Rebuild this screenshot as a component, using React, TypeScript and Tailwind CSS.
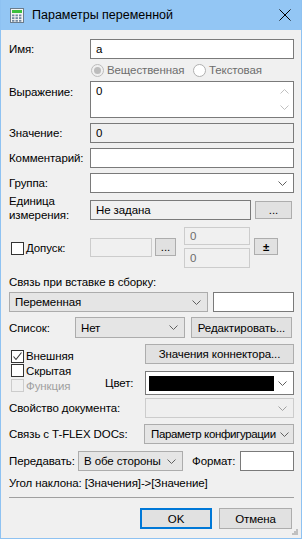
import React from "react";

function Chevron({ color = "#606060" }: { color?: string }) {
  return (
    <svg width="9" height="5" viewBox="0 0 9 5" className="shrink-0">
      <path d="M0.5 0.5 L4.5 4.5 L8.5 0.5" fill="none" stroke={color} strokeWidth="1" />
    </svg>
  );
}

function TextBox({ children, className = "" }: { children?: React.ReactNode; className?: string }) {
  return (
    <div className={"flex h-[20px] min-w-0 items-center border border-[#7a7a7a] bg-white px-[5px] " + className}>
      {children}
    </div>
  );
}

function Combo({
  children,
  className = "",
  flat = false,
  disabled = false,
}: {
  children?: React.ReactNode;
  className?: string;
  flat?: boolean;
  disabled?: boolean;
}) {
  const look = disabled
    ? "border-[#cccccc] bg-[#efefef]"
    : flat
      ? "border-[#7a7a7a] bg-white"
      : "border-[#acacac] bg-[#e5e5e5]";
  return (
    <div className={"flex h-[20px] min-w-0 items-center border pl-[5px] pr-[6px] " + look + " " + className}>
      <div className="min-w-0 flex-1 overflow-hidden whitespace-nowrap">{children}</div>
      <Chevron color={disabled ? "#a0a0a0" : "#606060"} />
    </div>
  );
}

function Button({ children, className = "" }: { children: React.ReactNode; className?: string }) {
  return (
    <div className={"flex shrink-0 items-center justify-center whitespace-nowrap border border-[#adadad] bg-[#e1e1e1] " + className}>
      {children}
    </div>
  );
}

function Check({ checked = false, disabled = false }: { checked?: boolean; disabled?: boolean }) {
  return (
    <div
      className={
        "flex h-[13px] w-[13px] shrink-0 items-center justify-center border " +
        (disabled ? "border-[#cccccc] bg-[#f0f0f0]" : "border-[#333333] bg-white")
      }
    >
      {checked && (
        <svg width="11" height="11" viewBox="0 0 11 11">
          <path d="M1.5 5.5 L4 8.5 L9.5 1.5" fill="none" stroke="#333333" strokeWidth="1.1" />
        </svg>
      )}
    </div>
  );
}

function Radio({ disabled = false }: { disabled?: boolean }) {
  return (
    <div
      className={
        "flex h-[13px] w-[13px] shrink-0 items-center justify-center rounded-full border " +
        (disabled ? "border-[#bcbcbc] bg-[#f0f0f0]" : "border-[#b0b0b0] bg-white")
      }
    >
      {disabled && <div className="h-[7px] w-[7px] rounded-full bg-[#bcbcbc]" />}
    </div>
  );
}

function TitleIcon() {
  return (
    <svg width="14" height="15" viewBox="0 0 14 15">
      <rect x="0.5" y="0.5" width="13" height="14" fill="#f4f4f4" stroke="#6b7c8c" />
      <rect x="2" y="2" width="10" height="3" fill="#3cbf3c" />
      {[0, 1, 2].map((r) =>
        [0, 1, 2].map((c) => (
          <rect key={r + "-" + c} x={2 + c * 3.5} y={6.5 + r * 2.7} width="2.4" height="1.8" fill="#7088a0" />
        ))
      )}
    </svg>
  );
}

export default function App() {
  return (
    <div className="relative flex h-[539px] w-[302px] flex-col whitespace-nowrap border-x border-b border-[#8ec2f2] bg-[#f0f0f0] font-['Liberation_Sans',Arial,sans-serif] text-[11.5px] leading-[14px] tracking-[-0.1px] text-black">
      {/* title bar */}
      <div className="flex h-[30px] shrink-0 items-center bg-[#93c6f4] pl-[9px] pr-[10px]">
        <TitleIcon />
        <div className="ml-[8px] flex-1 text-[12.5px] tracking-normal">Параметры переменной</div>
        <svg width="12" height="12" viewBox="0 0 12 12">
          <path d="M0.5 0.5 L11.5 11.5 M11.5 0.5 L0.5 11.5" stroke="#000" strokeWidth="1" />
        </svg>
      </div>

      <div className="flex flex-1 flex-col pl-[8px] pr-[7px]">
        <div className="mt-[9px] flex h-[20px] items-center">
          <div className="w-[81px] shrink-0">Имя:</div>
          <TextBox className="flex-1">a</TextBox>
        </div>

        <div className="mt-[4px] flex h-[14px] items-center pl-[82px]">
          <div className="flex w-[102px] shrink-0 items-center gap-[3px] text-[#6d6d6d]">
            <Radio disabled />
            <span>Вещественная</span>
          </div>
          <div className="flex items-center gap-[3px] text-[#6d6d6d]">
            <Radio />
            <span>Текстовая</span>
          </div>
        </div>

        <div className="mt-[4px] flex h-[37px]">
          <div className="w-[81px] shrink-0 pt-[4px]">Выражение:</div>
          <div className="flex min-w-0 flex-1 border border-[#7a7a7a] bg-white">
            <div className="flex-1 pl-[5px] pt-[2px]">0</div>
            <div className="flex w-[17px] flex-col items-center justify-between py-[7px]">
              <svg width="9" height="5" viewBox="0 0 9 5">
                <path d="M0.5 4.5 L4.5 0.5 L8.5 4.5" fill="none" stroke="#c0c0c0" />
              </svg>
              <svg width="9" height="5" viewBox="0 0 9 5">
                <path d="M0.5 0.5 L4.5 4.5 L8.5 0.5" fill="none" stroke="#c0c0c0" />
              </svg>
            </div>
          </div>
        </div>

        <div className="mt-[5px] flex h-[20px] items-center">
          <div className="w-[81px] shrink-0">Значение:</div>
          <TextBox className="flex-1 !bg-[#f0f0f0]">0</TextBox>
        </div>

        <div className="mt-[5px] flex h-[20px] items-center">
          <div className="w-[81px] shrink-0">Комментарий:</div>
          <TextBox className="flex-1" />
        </div>

        <div className="mt-[5px] flex h-[20px] items-center">
          <div className="w-[81px] shrink-0">Группа:</div>
          <Combo flat className="flex-1" />
        </div>

        <div className="flex h-[28px] items-start">
          <div className="w-[81px] shrink-0 pt-[1px] leading-[14px]">
            Единица
            <br />
            измерения:
          </div>
          <TextBox className="mt-[7px] w-[161px] !bg-[#f0f0f0]">Не задана</TextBox>
          <Button className="ml-[4px] mt-[8px] h-[18px] w-[37px]">...</Button>
        </div>

        {/* tolerance */}
        <div className="mt-[6px] flex h-[40px] items-start">
          <div className="mt-[14px] flex w-[81px] shrink-0 items-center gap-[2px] pl-[2px]">
            <Check />
            <span>Допуск:</span>
          </div>
          <div className="mt-[11px] h-[19px] w-[62px] shrink-0 border border-[#cccccc] bg-[#f0f0f0]" />
          <Button className="ml-[3px] mt-[11px] h-[18px] w-[21px]">...</Button>
          <div className="ml-[8px] flex w-[66px] shrink-0 flex-col gap-[3px] text-[#6d6d6d]">
            <div className="flex h-[18px] items-center border border-[#cccccc] pl-[5px]">0</div>
            <div className="flex h-[20px] items-center border border-[#cccccc] pl-[5px]">0</div>
          </div>
          <Button className="ml-[4px] mt-[11px] h-[17px] w-[24px] font-bold">±</Button>
        </div>

        <div className="mt-[8px] h-[14px]">Связь при вставке в сборку:</div>

        <div className="mt-[3px] flex h-[20px] items-center gap-[5px]">
          <Combo className="w-[199px] shrink-0">Переменная</Combo>
          <TextBox className="flex-1" />
        </div>

        <div className="mt-[5px] flex h-[21px] items-center">
          <div className="w-[66px] shrink-0">Список:</div>
          <Combo className="h-[21px] w-[110px] shrink-0">Нет</Combo>
          <Button className="ml-[6px] h-[21px] w-[101px]">Редактировать...</Button>
        </div>

        {/* flags, connector, colour */}
        <div className="mt-[6px] flex h-[51px]">
          <div className="flex w-[91px] shrink-0 flex-col pl-[2px] pt-[5px]">
            <div className="flex h-[14px] items-center gap-[2px]">
              <Check checked />
              <span>Внешняя</span>
            </div>
            <div className="flex h-[15px] items-center gap-[2px]">
              <Check />
              <span>Скрытая</span>
            </div>
            <div className="flex h-[15px] items-center gap-[2px] text-[#a0a0a0]">
              <Check disabled />
              <span>Функция</span>
            </div>
          </div>
          <div className="flex min-w-0 flex-1 flex-col">
            <Button className="ml-[45px] h-[20px]">Значения коннектора...</Button>
            <div className="mt-[7px] flex h-[24px] items-center">
              <div className="w-[45px] shrink-0 pl-[5px]">Цвет:</div>
              <div className="flex h-[24px] min-w-0 flex-1 items-center border border-[#7a7a7a] bg-white pl-[3px] pr-[6px]">
                <div className="h-[15px] w-[125px] bg-black" />
                <div className="flex-1" />
                <Chevron />
              </div>
            </div>
          </div>
        </div>

        <div className="mt-[3px] flex h-[20px] items-center">
          <div className="w-[136px] shrink-0">Свойство документа:</div>
          <Combo disabled className="flex-1" />
        </div>

        <div className="mt-[6px] flex h-[20px] items-center">
          <div className="w-[135px] shrink-0">Связь с T-FLEX DOCs:</div>
          <Combo className="flex-1 !pl-[6px] !pr-[4px] tracking-[-0.35px]">Параметр конфигурации</Combo>
        </div>

        <div className="mt-[7px] flex h-[20px] items-center">
          <div className="w-[69px] shrink-0">Передавать:</div>
          <Combo className="w-[105px] shrink-0">В обе стороны</Combo>
          <div className="ml-[9px] w-[48px] shrink-0">Формат:</div>
          <TextBox className="flex-1" />
        </div>

        <div className="mt-[5px] flex h-[14px] items-center">Угол наклона: [Значения]-&gt;[Значение]</div>

        <div className="mt-[7px] h-[1px] bg-[#a0a0a0]" />

        <div className="mt-[10px] flex h-[21px] justify-end pr-[2px]">
          <Button className="w-[72px] !border-2 !border-[#0078d7]">OK</Button>
          <Button className="ml-[7px] w-[73px]">Отмена</Button>
        </div>
      </div>

      <svg width="6" height="6" viewBox="0 0 6 6" className="absolute bottom-[3px] right-[3px]">
        <rect x="4" y="0" width="2" height="2" fill="#c0c0c0" />
        <rect x="2" y="2" width="2" height="2" fill="#c0c0c0" />
        <rect x="4" y="2" width="2" height="2" fill="#c0c0c0" />
        <rect x="0" y="4" width="2" height="2" fill="#c0c0c0" />
        <rect x="2" y="4" width="2" height="2" fill="#c0c0c0" />
        <rect x="4" y="4" width="2" height="2" fill="#c0c0c0" />
      </svg>
    </div>
  );
}
